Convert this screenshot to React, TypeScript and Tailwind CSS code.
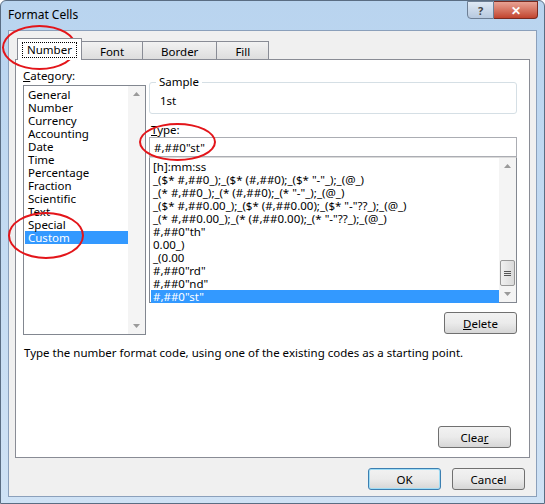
import React from 'react'

const categories = ['General', 'Number', 'Currency', 'Accounting', 'Date', 'Time', 'Percentage', 'Fraction', 'Scientific', 'Text', 'Special', 'Custom']
const formats = [
  '[h]:mm:ss',
  '_($* #,##0_);_($* (#,##0);_($* "-"_);_(@_)',
  '_(* #,##0_);_(* (#,##0);_(* "-"_);_(@_)',
  '_($* #,##0.00_);_($* (#,##0.00);_($* "-"??_);_(@_)',
  '_(* #,##0.00_);_(* (#,##0.00);_(* "-"??_);_(@_)',
  '#,##0"th"',
  '0.00_)',
  '_(0.00',
  '#,##0"rd"',
  '#,##0"nd"',
  '#,##0"st"',
]

const Btn = ({ children, primary }: { children: React.ReactNode; primary?: boolean }) => (
  <div
    className={`w-[73px] h-[22px] flex items-center justify-center rounded-[3px] border ${
      primary ? 'border-[#3c7fb1] shadow-[inset_0_0_0_1px_#9fdcf5]' : 'border-[#707070]'
    } bg-gradient-to-b from-[#f2f2f2] via-[#ebebeb] to-[#d6d6d6]`}
  >
    {children}
  </div>
)

const Arrow = ({ up }: { up?: boolean }) => (
  <div className="h-[16px] flex items-center justify-center">
    <svg width="7" height="4" viewBox="0 0 7 4">
      <path d={up ? 'M0 4L3.5 0L7 4Z' : 'M0 0L3.5 4L7 0Z'} fill="#9a9a9a" />
    </svg>
  </div>
)

const Ellipse = ({ className }: { className: string }) => (
  <div className={`absolute border-2 border-[#e3151a] rounded-[50%] pointer-events-none ${className}`} />
)

export default function App() {
  return (
    <div
      className="relative w-[545px] h-[504px] bg-gradient-to-b from-[#b9d4ef] to-[#cfe2f5] rounded-t-[6px] border border-[#5a6d83] text-black text-[11.5px] leading-[13px]"
      style={{ fontFamily: '"Noto Sans", "Open Sans", sans-serif' }}
    >
      {/* Title bar */}
      <div className="h-[29px] flex items-start justify-between pl-[7px]">
        <div className="pt-[7px] text-[12px]">Format Cells</div>
        <div className="flex mr-[6px]">
          <div className="w-[27px] h-[18px] border border-[#6d7f95] rounded-bl-[4px] bg-gradient-to-b from-[#dfe9f5] to-[#b7c9df] flex items-center justify-center text-[#444] text-[11px] font-bold">?</div>
          <div className="w-[44px] h-[18px] border border-l-0 border-[#7a2a20] rounded-br-[4px] bg-gradient-to-b from-[#e8a294] to-[#c1432e] flex items-center justify-center text-white text-[12px] font-bold">✕</div>
        </div>
      </div>

      {/* Client area */}
      <div className="mx-[7px] h-[467px] bg-[#f0f0f0] border border-[#8ba0bb] flex flex-col px-[6px] pt-[7px]">
        {/* Tabs */}
        <div className="flex items-end h-[22px] pl-[2px]">
          <div className="h-[22px] px-[4px] bg-white border border-b-0 border-[#898c95] flex items-center z-10">
            <span className="border border-dotted border-black px-[4px] leading-[14px]">Number</span>
          </div>
          {['Font', 'Border', 'Fill'].map(t => (
            <div key={t} className="h-[19px] -ml-px px-[18px] border border-b-0 border-[#898c95] bg-gradient-to-b from-[#f2f2f2] to-[#dcdcdc] flex items-center">
              {t}
            </div>
          ))}
        </div>
        <div className="h-[399px] -mt-px bg-white border border-[#898c95] flex flex-col px-[7px]">
          <div className="flex gap-[3px]">
            {/* Category */}
            <div className="flex flex-col">
              <div className="pt-[9px] h-[25px]"><u>C</u>ategory:</div>
              <div className="w-[123px] h-[250px] border border-[#828790] flex">
                <div className="flex-1 pt-[2px] pl-[1px]">
                  {categories.map(c => (
                    <div key={c} className={`h-[13px] pl-[3px] ${c === 'Custom' ? 'bg-[#3399ff] text-white' : ''}`}>{c}</div>
                  ))}
                </div>
                <div className="w-[17px] bg-[#f4f4f4] flex flex-col justify-between">
                  <Arrow up />
                  <Arrow />
                </div>
              </div>
            </div>

            {/* Right side */}
            <div className="w-[368px] flex flex-col pt-[22px]">
              <div className="relative w-[368px] h-[32px] border border-[#d5dfe5] rounded-[3px]">
                <span className="absolute -top-[8px] left-[6px] bg-white px-[3px]">Sample</span>
                <div className="pt-[11px] pl-[10px]">1st</div>
              </div>
              <div className="pt-[9px] h-[23px] pl-[2px]"><u>T</u>ype:</div>
              <div className="w-[368px] h-[20px] border border-[#abadb3] flex items-center pl-[4px]">#,##0"st"</div>
              <div className="w-[368px] h-[146px] border border-[#828790] border-t-[#dadada] flex">
                <div className="flex-1 pt-[2px] pl-[1px]">
                  {formats.map((f, i) => (
                    <div key={i} className={`h-[13px] pl-[2px] whitespace-pre ${i === formats.length - 1 ? 'bg-[#3399ff] text-white' : ''}`}>{f}</div>
                  ))}
                </div>
                <div className="w-[17px] bg-[#f4f4f4] flex flex-col">
                  <Arrow up />
                  <div className="flex-1" />
                  <div className="h-[26px] mx-[1px] border border-[#979797] rounded-[2px] bg-gradient-to-r from-[#f0f0f0] to-[#dadada] flex items-center justify-center">
                    <div className="w-[7px] flex flex-col gap-[1px]">
                      <div className="h-px bg-[#555]" /><div className="h-px bg-[#555]" /><div className="h-px bg-[#555]" />
                    </div>
                  </div>
                  <Arrow />
                </div>
              </div>
              <div className="flex justify-end pt-[9px]">
                <Btn><span><u>D</u>elete</span></Btn>
              </div>
            </div>
          </div>
          <div className="pt-[11px] pl-[1px]">Type the number format code, using one of the existing codes as a starting point.</div>
          <div className="flex-1" />
          <div className="flex justify-end pb-[9px] pr-[11px]">
            <Btn><span>Clea<u>r</u></span></Btn>
          </div>
        </div>
        <div className="flex justify-end gap-[11px] pt-[10px] pr-[5px]">
          <Btn primary>OK</Btn>
          <Btn>Cancel</Btn>
        </div>
      </div>

      <Ellipse className="left-[1px] top-[24px] w-[75px] h-[45px]" />
      <Ellipse className="left-[138px] top-[122px] w-[77px] h-[38px]" />
      <Ellipse className="left-[7px] top-[211px] w-[76px] h-[47px]" />
    </div>
  )
}
